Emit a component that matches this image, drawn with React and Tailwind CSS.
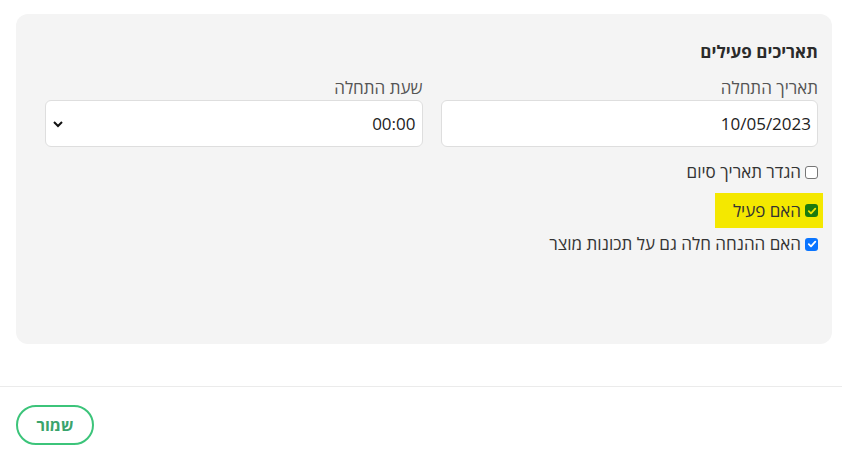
import React from "react";

function Box({ variant }) {
  if (variant === "empty") {
    return <span className="inline-block w-[13px] h-[13px] rounded-[3px] border border-[#767676] bg-white shrink-0" />;
  }
  const bg = variant === "green" ? "bg-[#1b7a0e]" : "bg-[#0a75ff]";
  const stroke = variant === "green" ? "#f2e600" : "#ffffff";
  return (
    <span className={`inline-flex items-center justify-center w-[13px] h-[13px] rounded-[3px] ${bg} shrink-0`}>
      <svg width="10" height="10" viewBox="0 0 10 10">
        <path d="M1.8 5.2 L4 7.3 L8.3 2.6" fill="none" stroke={stroke} strokeWidth="1.8" strokeLinecap="round" strokeLinejoin="round" />
      </svg>
    </span>
  );
}

export default function App() {
  return (
    <div dir="rtl" className="w-[842px] h-[451px] bg-white overflow-hidden" style={{ fontFamily: '"Open Sans", "Noto Sans", sans-serif' }}>
      <div className="pt-[14px] mr-[10px] ml-4">
        <div className="h-[330px] rounded-[12px] bg-[#f4f4f4] pt-[26px] pr-[14px] pl-[29px]">
          <div className="text-[17px] leading-6 font-bold text-[#2b2b2b]">תאריכים פעילים</div>
          <div className="grid grid-cols-2 gap-x-[18px] mt-3">
            <div>
              <div className="text-[17px] leading-6 text-[#555]">תאריך התחלה</div>
              <div className="h-[47px] rounded-[6px] border border-[#dedede] bg-white flex items-center px-[6px] text-[17px] text-[#222]">
                10/05/2023
              </div>
            </div>
            <div>
              <div className="text-[17px] leading-6 text-[#555]">שעת התחלה</div>
              <div className="h-[47px] rounded-[6px] border border-[#dedede] bg-white flex items-center justify-between pr-[6px] pl-[6px] text-[17px] text-[#222]">
                <span>00:00</span>
                <svg width="12" height="8" viewBox="0 0 12 8">
                  <path d="M2 2 L6 6 L10 2" fill="none" stroke="#111" strokeWidth="2" />
                </svg>
              </div>
            </div>
          </div>
          <div className="mt-[13px] flex flex-col items-start">
            <label className="flex items-center gap-[4px] text-[17px] leading-6 text-[#333]">
              <Box variant="empty" />
              <span>הגדר תאריך סיום</span>
            </label>
            <label className="mt-[9px] flex items-center gap-[4px] text-[17px] leading-6 text-[#333] bg-[#f4e800] h-[35px] pr-[5px] -mr-[5px] pl-[18px]">
              <Box variant="green" />
              <span>האם פעיל</span>
            </label>
            <label className="mt-[4px] flex items-center gap-[4px] text-[17px] leading-6 text-[#333]">
              <Box variant="blue" />
              <span>האם ההנחה חלה גם על תכונות מוצר</span>
            </label>
          </div>
        </div>
      </div>
      <div className="mt-[42px] border-t border-[#ebebeb]" />
      <div className="pt-[18px] px-4 flex justify-end">
        <button className="w-[78px] h-[40px] rounded-full border-2 border-[#3cc47a] text-[#3aa46c] font-bold text-[16px] bg-white">
          שמור
        </button>
      </div>
    </div>
  );
}
